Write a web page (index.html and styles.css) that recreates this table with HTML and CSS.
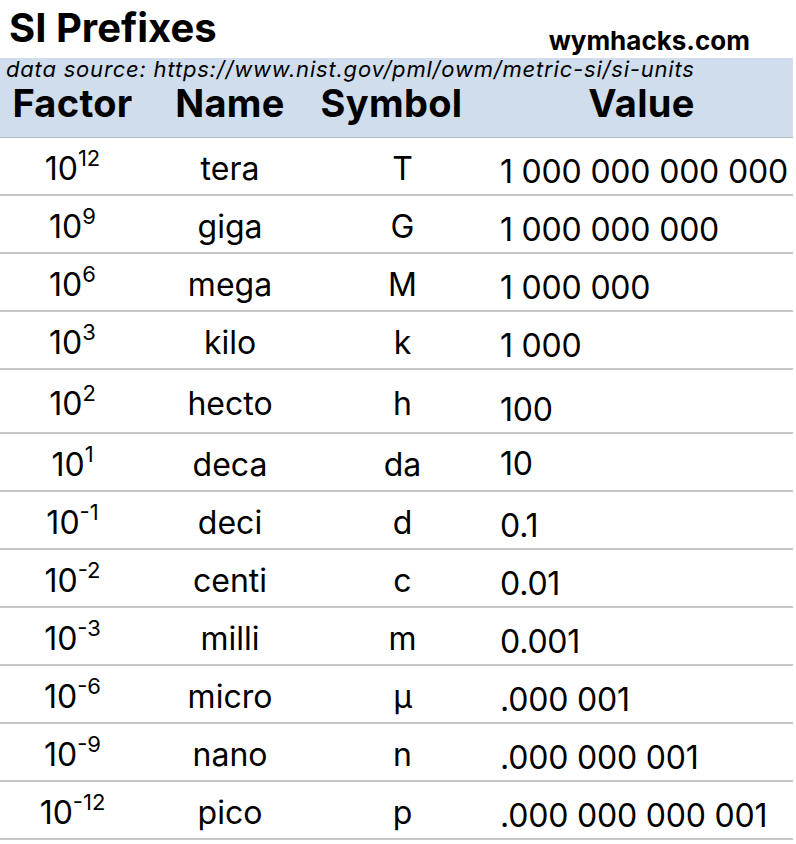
FILE: index.html
```html
<!DOCTYPE html>
<html>
<head>
<meta charset="utf-8">
<link rel="stylesheet" href="styles.css">
</head>
<body>
<div class="page">
  <div class="top">
    <h1 class="title">SI Prefixes</h1>
    <div class="site">wymhacks.com</div>
  </div>
  <div class="head">
    <div class="source">data source: https://www.nist.gov/pml/owm/metric-si/si-units</div>
    <div class="row hrow">
      <div class="c c1">Factor</div>
      <div class="c c2">Name</div>
      <div class="c c3 hsym">Symbol</div>
      <div class="c c4 hval">Value</div>
    </div>
  </div>
  <div class="body">
    <div class="row"><div class="c c1">10<sup>12</sup></div><div class="c c2">tera</div><div class="c c3">T</div><div class="c c4">1 000 000 000 000</div></div>
    <div class="row"><div class="c c1">10<sup>9</sup></div><div class="c c2">giga</div><div class="c c3">G</div><div class="c c4">1 000 000 000</div></div>
    <div class="row"><div class="c c1">10<sup>6</sup></div><div class="c c2">mega</div><div class="c c3">M</div><div class="c c4">1 000 000</div></div>
    <div class="row"><div class="c c1">10<sup>3</sup></div><div class="c c2">kilo</div><div class="c c3">k</div><div class="c c4">1 000</div></div>
    <div class="row tall"><div class="c c1">10<sup>2</sup></div><div class="c c2">hecto</div><div class="c c3">h</div><div class="c c4 low">100</div></div>
    <div class="row"><div class="c c1">10<sup>1</sup></div><div class="c c2">deca</div><div class="c c3">da</div><div class="c c4 up">10</div></div>
    <div class="row"><div class="c c1">10<sup>-1</sup></div><div class="c c2">deci</div><div class="c c3">d</div><div class="c c4">0.1</div></div>
    <div class="row"><div class="c c1">10<sup>-2</sup></div><div class="c c2">centi</div><div class="c c3">c</div><div class="c c4">0.01</div></div>
    <div class="row"><div class="c c1">10<sup>-3</sup></div><div class="c c2">milli</div><div class="c c3">m</div><div class="c c4">0.001</div></div>
    <div class="row"><div class="c c1">10<sup>-6</sup></div><div class="c c2">micro</div><div class="c c3">μ</div><div class="c c4">.000 001</div></div>
    <div class="row"><div class="c c1">10<sup>-9</sup></div><div class="c c2">nano</div><div class="c c3">n</div><div class="c c4">.000 000 001</div></div>
    <div class="row"><div class="c c1">10<sup>-12</sup></div><div class="c c2">pico</div><div class="c c3">p</div><div class="c c4">.000 000 000 001</div></div>
  </div>
</div>
</body>
</html>
```

FILE: styles.css
```css
html, body {
  margin: 0;
  padding: 0;
  background: #ffffff;
}
body {
  font-family: Inter, "Noto Sans", sans-serif;
  color: #000;
}
.page {
  width: 793px;
}
.top {
  height: 58px;
  display: flex;
  justify-content: space-between;
  align-items: flex-start;
}
.title {
  margin: 0;
  padding: 4px 0 0 9px;
  font-size: 40px;
  font-weight: 700;
  line-height: 48px;
}
.site {
  font-size: 26px;
  font-weight: 700;
  line-height: 30px;
  padding: 26px 43px 0 0;
}
.head {
  background: #cfdded;
  height: 80px;
  border-bottom: 1px solid #b4b8bd;
  box-sizing: border-box;
}
.source {
  font-style: italic;
  font-size: 22px;
  line-height: 22px;
  letter-spacing: 0.8px;
  padding-left: 6px;
  white-space: nowrap;
}
.row {
  display: grid;
  grid-template-columns: 145px 170px 175px 303px;
  height: 58px;
  border-bottom: 2px solid #c6c6c6;
  box-sizing: border-box;
  align-items: center;
}
.row.tall {
  height: 64px;
}
.hrow {
  height: 44px;
  border-bottom: none;
  font-weight: 700;
  font-size: 38px;
  letter-spacing: 0.3px;
}
.c {
  text-align: center;
  font-size: inherit;
}
.body .row {
  font-size: 32px;
}
.body .c {
  padding-top: 4px;
}
.hsym {
  padding-right: 22px;
}
.body .c4 {
  text-align: left;
  padding-left: 10px;
  padding-top: 10px;
  letter-spacing: -0.2px;
}
.body .c4.low {
  padding-top: 16px;
}
.body .c4.up {
  padding-top: 2px;
}
sup {
  font-size: 22px;
  line-height: 0;
  vertical-align: 14px;
}
```
